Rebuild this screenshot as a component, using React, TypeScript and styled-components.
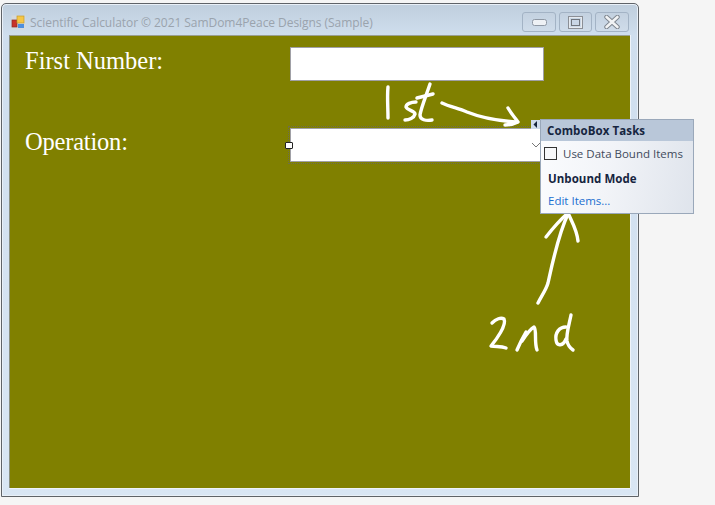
import React from "react";
import styled, { createGlobalStyle } from "styled-components";

const Global = createGlobalStyle`
  html, body { margin: 0; padding: 0; background: #f5f5f5; }
  #root { width: 715px; height: 505px; overflow: hidden; }
`;

const Page = styled.div`
  position: relative;
  width: 715px;
  height: 505px;
  padding: 3px 0 0 1px;
  box-sizing: border-box;
  background: #f5f5f5;
`;

const Window = styled.div`
  width: 638px;
  height: 494px;
  box-sizing: border-box;
  border: 1px solid #5f6368;
  border-radius: 5px 5px 0 0;
  background: linear-gradient(180deg, #bfcedd 0, #cfdeee 32px, #d9e6f4 100%);
  box-shadow: inset 0 0 0 1px #e9f0f8;
  display: flex;
  flex-direction: column;
`;

const TitleBar = styled.div`
  height: 31px;
  flex: none;
  box-sizing: border-box;
  display: flex;
  align-items: center;
  padding: 5px 9px 0 9px;
  gap: 4px;
`;

const AppIcon = styled.svg`
  flex: none;
`;

const Title = styled.span`
  flex: 1;
  font: 12px "Open Sans", sans-serif;
  color: #9aa3ad;
  white-space: nowrap;
  letter-spacing: -0.055px;
`;

const Controls = styled.div`
  display: flex;
  gap: 3px;
`;

const ControlButton = styled.div<{ $w: number }>`
  width: ${(p) => p.$w}px;
  height: 20px;
  box-sizing: border-box;
  border: 1px solid #a3b3c5;
  border-radius: 3px;
  background: linear-gradient(180deg, #c3d1e0, #cfdcea);
  display: flex;
  align-items: center;
  justify-content: center;
`;

const Client = styled.div`
  flex: 1;
  margin: 0 8px 8px 7px;
  border-top: 1px solid #9a9f90;
  border-left: 1px solid #8a8f80;
  background: #808000;
  box-shadow: 0 1px 0 #eef3f9, 1px 0 0 #eef3f9;
  box-sizing: border-box;
  display: grid;
  grid-template-columns: 280px 254px;
  grid-template-rows: 34px 34px;
  row-gap: 47px;
  padding-top: 11px;
  align-content: start;
`;

const Label = styled.label<{ $tight?: boolean }>`
  font: 24.5px "Liberation Serif", serif;
  color: #ffffff;
  padding-left: 15px;
  line-height: 28px;
  letter-spacing: ${(p) => (p.$tight ? "-0.2px" : "0")};
`;

const TextBox = styled.div`
  box-sizing: border-box;
  background: #fff;
  border: 1px solid #a0a0a6;
`;

const ComboBox = styled.div`
  position: relative;
  box-sizing: border-box;
  background: #fff;
  border: 1px solid #a0a0a6;
  display: flex;
  align-items: center;
  justify-content: flex-end;
  padding-right: 2px;
`;

const SelectionFrame = styled.div`
  position: absolute;
  inset: -3px;
  border: 1px dotted #6d6d50;
  pointer-events: none;
`;

const Handle = styled.div`
  position: absolute;
  left: -6px;
  top: 13px;
  width: 8px;
  height: 7px;
  box-sizing: border-box;
  background: #fff;
  border: 1px solid #222;
  border-radius: 1px;
`;

const SmartTag = styled.div`
  position: absolute;
  left: 531px;
  top: 120px;
  width: 9px;
  height: 9px;
  background: #cfdcec;
  display: flex;
  align-items: center;
  justify-content: center;
`;

const TaskPanel = styled.div`
  position: absolute;
  left: 540px;
  top: 119px;
  width: 154px;
  height: 95px;
  box-sizing: border-box;
  border: 1px solid #9aa8ba;
  background: linear-gradient(100deg, #fbfcfe 0%, #f2f4f8 45%, #dfe4ec 100%);
  font-family: "Open Sans", sans-serif;
  font-size: 11.5px;
`;

const PanelHeader = styled.div`
  height: 21px;
  padding-left: 6px;
  background: #b9c7d9;
  color: #16253f;
  font-weight: 700;
  font-size: 11.5px;
  line-height: 21px;
  letter-spacing: 0.1px;
`;

const CheckRow = styled.div`
  display: flex;
  align-items: center;
  gap: 6px;
  height: 24px;
  padding-left: 3px;
  color: #3f4a5c;
  white-space: nowrap;
`;

const CheckBox = styled.span`
  width: 13px;
  height: 13px;
  box-sizing: border-box;
  border: 1px solid #333;
  background: #f7f8fa;
`;

const SectionTitle = styled.div`
  padding-left: 7px;
  margin-top: 4px;
  height: 19px;
  line-height: 19px;
  font-weight: 700;
  color: #16253f;
  letter-spacing: 0.05px;
`;

const EditLink = styled.a`
  display: block;
  padding-left: 7px;
  margin-top: 3px;
  line-height: 19px;
  color: #1a6fd0;
`;

const Ink = styled.svg`
  position: absolute;
  inset: 0;
  pointer-events: none;
`;

const strokes = [
  "M388 87 C387 97 388 108 388 118",
  "M416 102 C411 102 406 104 406 107 C407 110 415 111 415 114 C414 118 409 120 405 120",
  "M430 84 C426 96 421 108 420 115 C420 120 426 121 432 120",
  "M417 98 L433 94",
  "M442 103 C450 107 458 108 467 112 C482 118 500 121 517 122",
  "M508 108 C511 113 515 118 518 122 C514 124 509 125 505 125",
  "M538 303 C542 295 546 290 548 283 C552 265 558 235 568 214",
  "M546 237 C553 228 560 220 568 213 C572 222 577 230 578 241",
  "M492 323 C496 319 501 317 504 319 C507 325 496 340 491 346 C496 347 501 346 506 348",
  "M517 350 C520 343 523 337 526 332",
  "M522 341 C526 335 530 329 534 327 C537 330 534 342 537 350",
  "M566 327 C559 327 555 333 556 340 C557 347 563 346 566 339",
  "M571 315 C569 325 566 334 567 341 C568 346 570 348 573 350",
];

export default function App() {
  return (
    <Page>
      <Global />
      <Window>
        <TitleBar>
          <AppIcon width="15" height="15" viewBox="0 0 15 15">
            <rect x="0.5" y="0.5" width="14" height="14" fill="#d4d9de" />
            <rect x="1" y="5" width="5" height="7" fill="#c8322a" stroke="#8c2a25" strokeWidth="0.7" />
            <rect x="6" y="1" width="7" height="7" fill="#f6c646" stroke="#c39a2c" strokeWidth="0.7" />
            <rect x="7" y="9" width="6" height="4" fill="#4e8fde" />
          </AppIcon>
          <Title>Scientific Calculator © 2021 SamDom4Peace Designs (Sample)</Title>
          <Controls>
            <ControlButton $w={34}>
              <svg width="15" height="7" viewBox="0 0 15 7">
                <rect x="0.5" y="0.5" width="14" height="6" rx="2" fill="#eef1f5" stroke="#8f98a4" />
              </svg>
            </ControlButton>
            <ControlButton $w={33}>
              <svg width="15" height="13" viewBox="0 0 15 13">
                <rect x="1" y="1" width="13" height="11" fill="none" stroke="#e6eaef" strokeWidth="2" />
                <rect x="0.5" y="0.5" width="14" height="12" fill="none" stroke="#8b8f96" />
                <rect x="3.5" y="3.5" width="8" height="6" fill="#c9d6e5" stroke="#70757c" />
              </svg>
            </ControlButton>
            <ControlButton $w={34}>
              <svg width="16" height="14" viewBox="0 0 16 14">
                <path d="M2.5 2 L13.5 12 M13.5 2 L2.5 12" stroke="#7c838c" strokeWidth="4.4" strokeLinecap="round" />
                <path d="M2.5 2 L13.5 12 M13.5 2 L2.5 12" stroke="#f1f3f5" strokeWidth="2.6" strokeLinecap="round" />
              </svg>
            </ControlButton>
          </Controls>
        </TitleBar>
        <Client>
          <Label>First Number:</Label>
          <TextBox />
          <Label $tight>Operation:</Label>
          <ComboBox>
            <SelectionFrame />
            <Handle />
            <svg width="10" height="6" viewBox="0 0 10 6">
              <path d="M1 1 L5 5 L9 1" fill="none" stroke="#777" strokeWidth="1" />
            </svg>
          </ComboBox>
        </Client>
      </Window>
      <Ink width="715" height="505" viewBox="0 0 715 505">
        {strokes.map((d) => (
          <path key={d} d={d} fill="none" stroke="#fff" strokeWidth="3.4" strokeLinecap="round" strokeLinejoin="round" />
        ))}
      </Ink>
      <SmartTag>
        <svg width="5" height="7" viewBox="0 0 5 7">
          <path d="M4 0 L0.5 3.5 L4 7 Z" fill="#16253f" />
        </svg>
      </SmartTag>
      <TaskPanel>
        <PanelHeader>ComboBox Tasks</PanelHeader>
        <CheckRow>
          <CheckBox />
          Use Data Bound Items
        </CheckRow>
        <SectionTitle>Unbound Mode</SectionTitle>
        <EditLink>Edit Items...</EditLink>
      </TaskPanel>
    </Page>
  );
}
